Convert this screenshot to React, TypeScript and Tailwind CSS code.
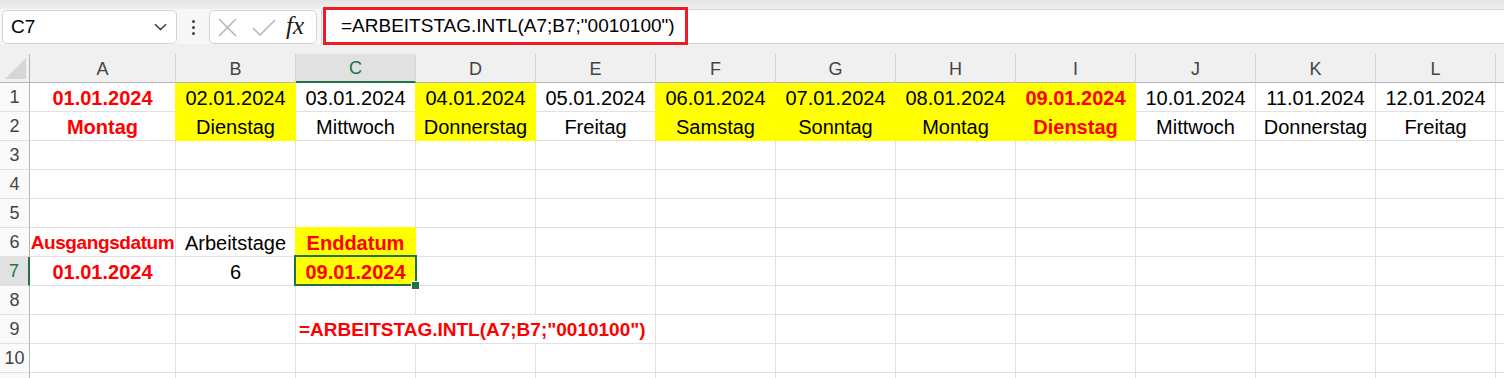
import React from 'react';

type Cell = {
  t?: string;
  b?: boolean;
  red?: boolean;
  y?: string; // yellow cover class
  sel?: boolean;
};

const cols = ['A', 'B', 'C', 'D', 'E', 'F', 'G', 'H', 'I', 'J', 'K', 'L'];
const colW = ['w-[146px]', 'w-[120px]', 'w-[120px]', 'w-[120px]', 'w-[120px]', 'w-[120px]', 'w-[120px]', 'w-[120px]', 'w-[120px]', 'w-[120px]', 'w-[120px]', 'w-[120px]'];

const days = ['Montag', 'Dienstag', 'Mittwoch', 'Donnerstag', 'Freitag', 'Samstag', 'Sonntag', 'Montag', 'Dienstag', 'Mittwoch', 'Donnerstag', 'Freitag'];
const yellowCols = [1, 3, 5, 6, 7, 8];
const redCols = [0, 8];
const formula = '=ARBEITSTAG.INTL(A7;B7;"0010100")';

const YL = 'bg-[#ffff00] border-[#ffff00] shadow-[-1px_0_0_#ffff00]';
const YLT = 'bg-[#ffff00] border-[#ffff00] shadow-[-1px_-1px_0_#ffff00]';

const row1: Cell[] = cols.map((_, i) => ({
  t: `${String(i + 1).padStart(2, '0')}.01.2024`,
  b: redCols.includes(i),
  red: redCols.includes(i),
  y: yellowCols.includes(i) ? YL : undefined,
}));
const row2: Cell[] = days.map((d, i) => ({
  t: d,
  b: redCols.includes(i),
  red: redCols.includes(i),
  y: yellowCols.includes(i) ? YL : undefined,
}));

const rows: Record<number, Cell[]> = {
  1: row1,
  2: row2,
  6: [{ t: 'Ausgangsdatum', b: true, red: true }, { t: 'Arbeitstage' }, { t: 'Enddatum', b: true, red: true, y: YLT }],
  7: [{ t: '01.01.2024', b: true, red: true }, { t: '6' }, { t: '09.01.2024', b: true, red: true, y: YL, sel: true }],
};

function GridCell({ cell, w }: { cell?: Cell; w: string }) {
  return (
    <div
      className={`relative ${w} h-[29px] shrink-0 flex items-center justify-center border-r border-b pt-[2px] ${
        cell?.y ?? 'border-[#e1e1e1]'
      } ${cell?.b ? 'font-bold' : ''} ${cell?.red ? 'text-[#ff0000]' : 'text-black'} ${
        cell?.t === 'Ausgangsdatum' ? 'text-[19px] tracking-[-0.4px]' : ''
      } whitespace-nowrap`}
    >
      {cell?.t}
      {cell?.sel && (
        <>
          <div className="absolute z-10 left-[-2px] top-[-2px] w-[123px] h-[31px] border-2 border-[#217346]" />
          <div className="absolute z-20 right-[-4px] bottom-[-4px] w-[7px] h-[7px] bg-[#217346] outline outline-1 outline-white" />
        </>
      )}
    </div>
  );
}

function RowHeader({ n, active }: { n: number; active?: boolean }) {
  return (
    <div
      className={`w-[30px] h-[29px] shrink-0 flex items-center justify-center pt-[1px] border-b border-[#e1e1e1] text-[18px] ${
        active ? 'bg-[#e1e1e1] border-r-2 border-r-[#217346] text-[#217346]' : 'bg-[#fafafa] border-r border-r-[#b4b4b4] text-[#444]'
      }`}
    >
      {n < 11 ? n : ''}
    </div>
  );
}

function Row({ n }: { n: number }) {
  const data = rows[n];
  if (n === 9) {
    return (
      <div className="flex">
        <RowHeader n={n} />
        <GridCell w="w-[146px]" />
        <GridCell w="w-[120px]" />
        <div className="w-[360px] h-[29px] shrink-0 flex items-center pl-[3px] pt-[2px] border-r border-b border-[#e1e1e1] font-bold text-[#ff0000] text-[19px] whitespace-nowrap">
          {formula}
        </div>
        {cols.slice(5).map((c, i) => (
          <GridCell key={c} w={colW[i + 5]} />
        ))}
        <div className="flex-1 h-[29px] border-b border-[#e1e1e1]" />
      </div>
    );
  }
  return (
    <div className="flex">
      <RowHeader n={n} active={n === 7} />
      {cols.map((c, i) => (
        <GridCell key={c} w={colW[i]} cell={data?.[i]} />
      ))}
      <div className="flex-1 h-[29px] border-b border-[#e1e1e1]" />
    </div>
  );
}

export default function App() {
  return (
    <div className="relative w-[1504px] h-[378px] overflow-hidden bg-white font-['Liberation_Sans',Arial,sans-serif] text-[20px]">
      {/* top strip */}
      <div className="h-[9px] bg-gradient-to-b from-[#e3e3e3] to-[#efefef]" />

      {/* formula bar */}
      <div className="h-[35px] flex bg-[#f7f7f7]">
        <div className="mt-[1px] ml-[2px] w-[175px] h-[34px] bg-white border border-[#d4d4d4] rounded-[5px] flex items-center pl-[8px] pr-[9px] text-[19px] text-black">
          <span className="flex-1">C7</span>
          <svg width="13" height="8" viewBox="0 0 13 8" fill="none">
            <path d="M1 1.2 L6.5 6.5 L12 1.2" stroke="#333" strokeWidth="1.4" />
          </svg>
        </div>
        <div className="w-[32px] flex flex-col items-center justify-center gap-[3px] pt-[1px]">
          <span className="w-[3px] h-[3px] bg-[#444] rounded-full" />
          <span className="w-[3px] h-[3px] bg-[#444] rounded-full" />
          <span className="w-[3px] h-[3px] bg-[#444] rounded-full" />
        </div>
        <div className="mt-[1px] w-[108px] h-[34px] bg-white border border-[#d4d4d4] rounded-[5px] flex items-center pl-[8px]">
          <svg width="19" height="19" viewBox="0 0 19 19" fill="none">
            <path d="M1 1 L18 18 M18 1 L1 18" stroke="#b4b4b4" strokeWidth="1.5" />
          </svg>
          <svg className="ml-[15px]" width="24" height="17" viewBox="0 0 24 17" fill="none">
            <path d="M1 9 L8 16 L23 1" stroke="#b4b4b4" strokeWidth="1.5" />
          </svg>
          <span className="ml-[10px] font-['Liberation_Serif',serif] italic text-[25px] leading-none text-[#1a1a1a] pb-[3px]">fx</span>
        </div>
        <div className="ml-[4px] flex-1 h-[35px] bg-white border-y border-l border-[#d4d4d4] flex items-center pl-[19px] text-[19px] text-black whitespace-nowrap">
          {formula}
        </div>
      </div>

      {/* spacer above headers */}
      <div className="h-[10px] bg-[#f0f0f0]" />

      {/* column headers */}
      <div className="flex h-[29px] bg-[#f0f0f0] text-[18px] text-[#444]">
        <div className="w-[30px] h-[29px] shrink-0 border-r border-b border-[#b4b4b4] flex items-end justify-end pr-[3px] pb-[3px]">
          <svg width="21" height="21" viewBox="0 0 21 21">
            <path d="M21 0 L21 21 L0 21 Z" fill="#d6d6d6" />
          </svg>
        </div>
        {cols.map((c, i) => (
          <div
            key={c}
            className={`${colW[i]} h-[29px] shrink-0 flex items-center justify-center pt-[2px] border-r border-r-[#d6d6d6] ${
              c === 'C' ? 'bg-[#e1e1e1] border-b-2 border-b-[#217346] text-[#217346]' : 'border-b border-b-[#b4b4b4]'
            }`}
          >
            {c}
          </div>
        ))}
        <div className="flex-1 h-[29px] border-b border-[#b4b4b4]" />
      </div>

      {/* grid */}
      {[1, 2, 3, 4, 5, 6, 7, 8, 9, 10, 11].map((n) => (
        <Row key={n} n={n} />
      ))}

      {/* red annotation frame around the formula */}
      <div className="absolute left-[323px] top-[7px] w-[365px] h-[38px] border-[3px] border-[#ed1c24]" />
    </div>
  );
}
